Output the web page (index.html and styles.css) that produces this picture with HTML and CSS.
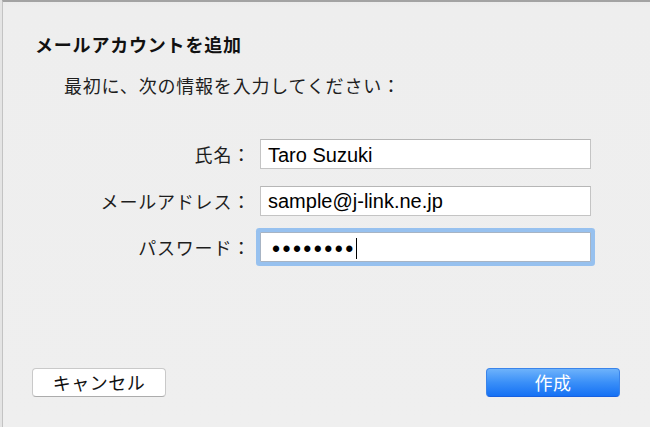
FILE: index.html
```html
<!doctype html>
<html lang="ja">
    <head>
        <meta charset="UTF-8" />
        <meta name="viewport" content="width=device-width, initial-scale=1.0" />
        <title>メールアカウントを追加</title>
        <link rel="stylesheet" href="styles.css">
    </head>
    <body>
        <div class="dialog">
            <h2 class="title">メールアカウントを追加</h2>
            <p class="lead">最初に、次の情報を入力してください：</p>

            <!-- Account form -->
            <form class="account-form" action="#" method="post">
                <label class="label" for="fullName">氏名：</label>
                <input class="field" type="text" id="fullName" name="fullName" value="Taro Suzuki" />

                <label class="label" for="email">メールアドレス：</label>
                <input class="field" type="email" id="email" name="email" value="sample@j-link.ne.jp" />

                <label class="label" for="password">パスワード：</label>
                <div class="field field-focused" id="password" role="textbox" aria-label="パスワード">
                    <span class="dots">••••••••</span><span class="caret"></span>
                </div>
            </form>

            <!-- Buttons -->
            <div class="footer">
                <button type="button" class="btn btn-cancel">キャンセル</button>
                <button type="submit" class="btn btn-primary">作成</button>
            </div>
        </div>
    </body>
</html>
```

FILE: styles.css
```css
/* Basic styling */
html,
body {
    height: 100%;
}
body {
    margin: 0;
    background-color: #e4e4e4;
    font-family: "Noto Sans CJK JP", "Liberation Sans", sans-serif;
    color: #1c1c1c;
    overflow: hidden;
}
.dialog {
    box-sizing: border-box;
    height: 100%;
    margin-left: 2px;
    display: flex;
    flex-direction: column;
    background: linear-gradient(#ebebeb, #eeeeee 6px, #efefef);
    border-top: 2px solid #a3a3a3;
    border-left: 1px solid #c3c3c3;
    padding: 30px 30px 30px 32px;
}
.title {
    margin: 0;
    font-size: 18px;
    font-weight: bold;
    line-height: 24px;
    letter-spacing: 0.8px;
    color: #111;
}
.lead {
    margin: 17px 0 0 29px;
    font-size: 18px;
    line-height: 24px;
    letter-spacing: 0.8px;
    color: #1e1e1e;
}

/* Form grid */
.account-form {
    margin: 42px 0 0 0;
    display: grid;
    grid-template-columns: 216px 331px;
    column-gap: 9px;
    row-gap: 16.5px;
    align-items: center;
}
.label {
    text-align: right;
    font-size: 18px;
    line-height: 24px;
    letter-spacing: 0.8px;
    color: #1e1e1e;
}
.field {
    box-sizing: border-box;
    height: 30px;
    margin: 0;
    padding: 2px 7px 0 7px;
    font-family: "Liberation Sans", Arial, sans-serif;
    font-size: 20px;
    color: #000;
    background-color: #fff;
    border: 1px solid #c4c4c4;
    border-top-color: #b6b6b6;
    border-radius: 0;
    outline: none;
}
.field-focused {
    display: flex;
    align-items: center;
    border-color: #a7b4c4;
    border-radius: 1px;
    box-shadow: 0 0 0 4px #97c1ef;
}
.dots {
    font-size: 23px;
    letter-spacing: 2.4px;
    line-height: 30px;
    margin: 2px 0 0 4px;
}
.caret {
    display: inline-block;
    width: 1px;
    height: 21px;
    margin-left: 0;
    background-color: #000;
}

/* Footer buttons */
.footer {
    margin: auto 0 0 -3px;
    display: flex;
    justify-content: space-between;
}
.btn {
    box-sizing: border-box;
    width: 134px;
    height: 29px;
    padding: 0 0 2px 0;
    font-family: "Noto Sans CJK JP", sans-serif;
    font-size: 18px;
    letter-spacing: 0.5px;
    border-radius: 4px;
    cursor: pointer;
}
.btn-cancel {
    background-color: #fff;
    color: #111;
    border: 1px solid #c9c9c9;
    border-bottom-color: #acacac;
}
.btn-primary {
    background: linear-gradient(#6db2fb, #3a8ff8 50%, #1571f4);
    color: #fff;
    border: 1px solid #3a84ea;
    border-bottom-color: #1760e0;
}
```
